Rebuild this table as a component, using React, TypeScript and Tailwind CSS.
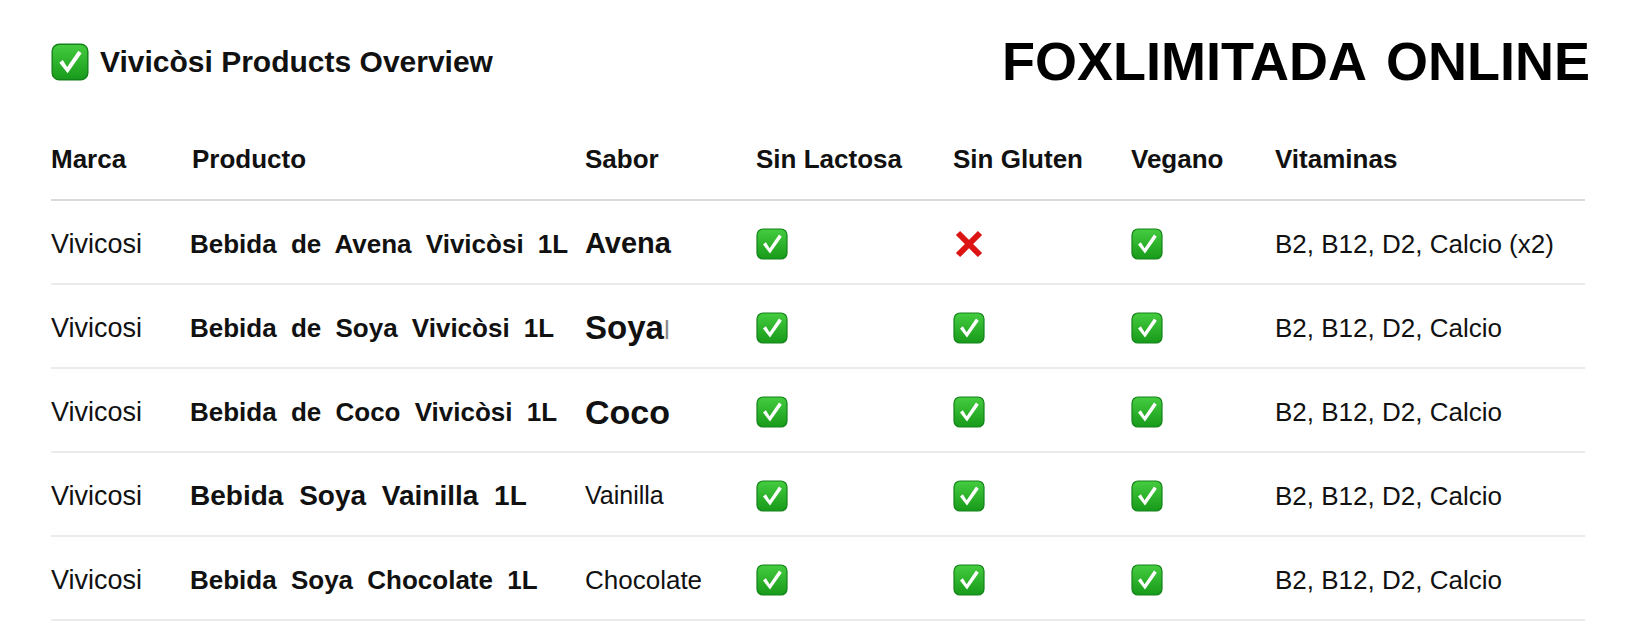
import React from "react";

const FONT = { fontFamily: '"Liberation Sans", Arial, Helvetica, sans-serif' };

function Check({ size = 32 }: { size?: number }) {
  return (
    <svg width={size} height={size} viewBox="0 0 32 32" aria-hidden>
      <defs>
        <linearGradient id="gck" x1="0" y1="0" x2="0" y2="1">
          <stop offset="0" stopColor="#45cc3f" />
          <stop offset="1" stopColor="#179a1a" />
        </linearGradient>
      </defs>
      <rect x="1" y="1" width="30" height="30" rx="6" fill="url(#gck)" stroke="#14821a" strokeWidth="1.2" />
      <path d="M7 16.6 L9.9 14.3 L13.6 20.2 L23 6.6 L25.8 8.7 L14 25.4 Z" fill="#ffffff" />
    </svg>
  );
}

function Cross({ size = 32 }: { size?: number }) {
  return (
    <svg width={size} height={size} viewBox="0 0 32 32" aria-hidden>
      <path d="M5 5 L27 27 M27 5 L5 27" stroke="#dc1414" strokeWidth="6" strokeLinecap="butt" />
    </svg>
  );
}

type Row = {
  product: string;
  productCls: string;
  sabor: React.ReactNode;
  lactosa: boolean;
  gluten: boolean;
  vegano: boolean;
  vit: string;
};

const rows: Row[] = [
  {
    product: "Bebida de Avena Vivicòsi 1L",
    productCls: "text-[26px] font-bold [word-spacing:7px]",
    sabor: <span className="text-[29px] font-bold">Avena</span>,
    lactosa: true,
    gluten: false,
    vegano: true,
    vit: "B2, B12, D2, Calcio (x2)",
  },
  {
    product: "Bebida de Soya Vivicòsi 1L",
    productCls: "text-[26px] font-bold [word-spacing:7px]",
    sabor: (
      <span className="text-[33px] font-bold">
        Soya<span className="text-[26px] font-normal text-[#8a8a8a]">l</span>
      </span>
    ),
    lactosa: true,
    gluten: true,
    vegano: true,
    vit: "B2, B12, D2, Calcio",
  },
  {
    product: "Bebida de Coco Vivicòsi 1L",
    productCls: "text-[26px] font-bold [word-spacing:7px]",
    sabor: <span className="text-[34px] font-bold">Coco</span>,
    lactosa: true,
    gluten: true,
    vegano: true,
    vit: "B2, B12, D2, Calcio",
  },
  {
    product: "Bebida Soya Vainilla 1L",
    productCls: "text-[28px] font-bold [word-spacing:8px]",
    sabor: <span className="text-[25px]">Vainilla</span>,
    lactosa: true,
    gluten: true,
    vegano: true,
    vit: "B2, B12, D2, Calcio",
  },
  {
    product: "Bebida Soya Chocolate 1L",
    productCls: "text-[26px] font-bold [word-spacing:7px]",
    sabor: <span className="text-[26px]">Chocolate</span>,
    lactosa: true,
    gluten: true,
    vegano: true,
    vit: "B2, B12, D2, Calcio",
  },
];

const GRID = "grid grid-cols-[139px_395px_171px_197px_178px_144px_1fr] items-center";

export default function App() {
  return (
    <div className="w-[1636px] h-[638px] bg-white text-[#111111] px-[51px] pt-[38px] overflow-hidden" style={FONT}>
      <div className="flex items-center justify-between h-[46px]">
        <div className="flex items-center gap-[11px] pt-[2px]">
          <Check size={38} />
          <span className="text-[30px] font-bold leading-none">Vivicòsi Products Overview</span>
        </div>
        <span className="text-[54px] font-bold leading-none text-black -mr-[5px] [word-spacing:6px]">
          FOXLIMITADA ONLINE
        </span>
      </div>

      <div className={`${GRID} mt-[36px] h-[81px] border-b-2 border-[#dadada] text-[26px] font-bold`}>
        <span>Marca</span>
        <span className="pl-[2px]">Producto</span>
        <span>Sabor</span>
        <span>Sin Lactosa</span>
        <span>Sin Gluten</span>
        <span>Vegano</span>
        <span>Vitaminas</span>
      </div>

      {rows.map((r, i) => (
        <div key={i} className={`${GRID} h-[84px] pt-[4px] border-b-2 border-[#ebebeb]`}>
          <span className="text-[27px]">Vivicosi</span>
          <span className={r.productCls}>{r.product}</span>
          <span>{r.sabor}</span>
          <span className="flex">{r.lactosa ? <Check /> : <Cross />}</span>
          <span className="flex">{r.gluten ? <Check /> : <Cross />}</span>
          <span className="flex">{r.vegano ? <Check /> : <Cross />}</span>
          <span className="text-[26px]">{r.vit}</span>
        </div>
      ))}
    </div>
  );
}
